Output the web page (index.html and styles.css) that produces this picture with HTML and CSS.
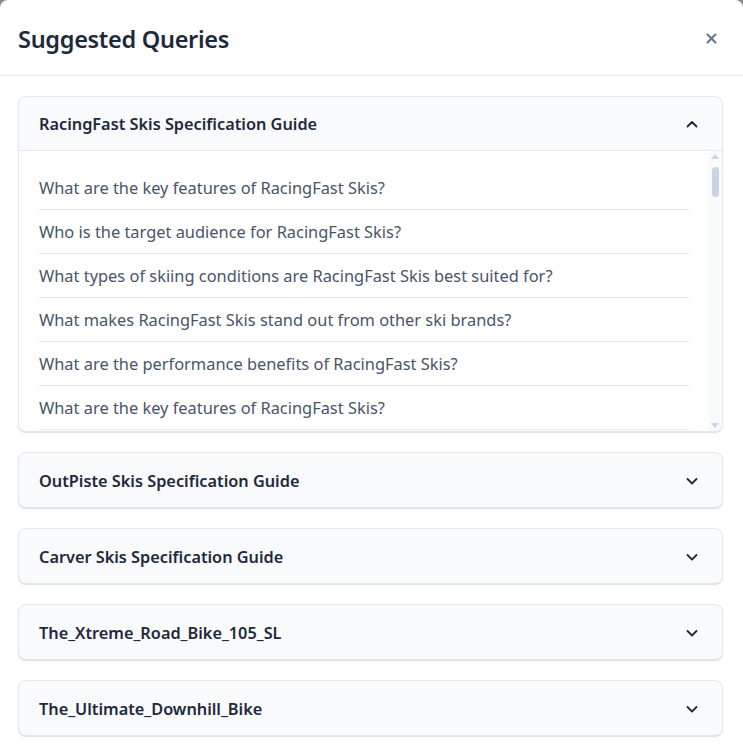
FILE: index.html
```html
<!DOCTYPE html>
<html lang="en">
<head>
<meta charset="utf-8">
<title>Suggested Queries</title>
<link rel="stylesheet" href="styles.css">
</head>
<body>
<div class="modal">
  <header class="modal-header">
    <h2 class="modal-title">Suggested Queries</h2>
    <button class="close-btn" aria-label="Close">
      <svg width="11" height="11" viewBox="0 0 11 11"><path d="M1.5 1.5L9.5 9.5M9.5 1.5L1.5 9.5" stroke="#64748b" stroke-width="2" stroke-linecap="round"/></svg>
    </button>
  </header>
  <div class="modal-body">
    <section class="acc open">
      <div class="acc-head">
        <span class="acc-title">RacingFast Skis Specification Guide</span>
        <svg class="chev" width="14" height="14" viewBox="0 0 14 14"><path d="M2.5 9.5L7 5L11.5 9.5" fill="none" stroke="#1e293b" stroke-width="1.8" stroke-linecap="round" stroke-linejoin="round"/></svg>
      </div>
      <div class="acc-content">
        <div class="q-scroll">
          <ul class="q-list">
            <li>What are the key features of RacingFast Skis?</li>
            <li>Who is the target audience for RacingFast Skis?</li>
            <li>What types of skiing conditions are RacingFast Skis best suited for?</li>
            <li>What makes RacingFast Skis stand out from other ski brands?</li>
            <li>What are the performance benefits of RacingFast Skis?</li>
            <li>What are the key features of RacingFast Skis?</li>
            <li>Who is the target audience for RacingFast Skis?</li>
          </ul>
        </div>
        <div class="scrollbar" aria-hidden="true">
          <span class="sb-up"></span>
          <span class="sb-thumb"></span>
          <span class="sb-down"></span>
        </div>
      </div>
    </section>
    <section class="acc">
      <div class="acc-head">
        <span class="acc-title">OutPiste Skis Specification Guide</span>
        <svg class="chev" width="14" height="14" viewBox="0 0 14 14"><path d="M2.5 5L7 9.5L11.5 5" fill="none" stroke="#1e293b" stroke-width="1.8" stroke-linecap="round" stroke-linejoin="round"/></svg>
      </div>
    </section>
    <section class="acc">
      <div class="acc-head">
        <span class="acc-title">Carver Skis Specification Guide</span>
        <svg class="chev" width="14" height="14" viewBox="0 0 14 14"><path d="M2.5 5L7 9.5L11.5 5" fill="none" stroke="#1e293b" stroke-width="1.8" stroke-linecap="round" stroke-linejoin="round"/></svg>
      </div>
    </section>
    <section class="acc">
      <div class="acc-head">
        <span class="acc-title">The_Xtreme_Road_Bike_105_SL</span>
        <svg class="chev" width="14" height="14" viewBox="0 0 14 14"><path d="M2.5 5L7 9.5L11.5 5" fill="none" stroke="#1e293b" stroke-width="1.8" stroke-linecap="round" stroke-linejoin="round"/></svg>
      </div>
    </section>
    <section class="acc">
      <div class="acc-head">
        <span class="acc-title">The_Ultimate_Downhill_Bike</span>
        <svg class="chev" width="14" height="14" viewBox="0 0 14 14"><path d="M2.5 5L7 9.5L11.5 5" fill="none" stroke="#1e293b" stroke-width="1.8" stroke-linecap="round" stroke-linejoin="round"/></svg>
      </div>
    </section>
  </div>
</div>
</body>
</html>
```
FILE: styles.css
```css
html, body {
  margin: 0;
  padding: 0;
  background: #8a8a8a;
  height: 100%;
  overflow: hidden;
}
body {
  font-family: "Noto Sans", "Open Sans", sans-serif;
  color: #1e293b;
}
.modal {
  background: #ffffff;
  border-radius: 8px 8px 0 0;
  height: 100%;
  display: flex;
  flex-direction: column;
}
.modal-header {
  height: 76px;
  flex: none;
  box-sizing: border-box;
  border-bottom: 1px solid #e2e8f0;
  display: flex;
  align-items: center;
  justify-content: space-between;
  padding: 2px 26px 0 18px;
}
.modal-title {
  margin: 0;
  font-size: 23.5px;
  font-weight: 600;
  color: #1e293b;
  letter-spacing: -0.3px;
}
.close-btn {
  border: 0;
  background: none;
  padding: 0;
  width: 11px;
  height: 11px;
  display: flex;
  cursor: pointer;
}
.modal-body {
  padding: 20px 20px 0 18px;
  display: flex;
  flex-direction: column;
  gap: 20px;
}
.acc {
  border: 1px solid #e2e8f0;
  border-radius: 8px;
  background: #f8fafc;
  overflow: hidden;
  box-shadow: 0 1px 1px rgba(148, 163, 184, 0.35);
}
.acc-head {
  height: 54px;
  box-sizing: border-box;
  display: flex;
  align-items: center;
  justify-content: space-between;
  padding: 1px 23px 0 20px;
}
.acc-title {
  font-size: 16.3px;
  font-weight: 600;
  color: #1e293b;
}
.chev {
  display: block;
}
.acc.open .acc-head {
  border-bottom: 1px solid #e2e8f0;
}
.acc-content {
  background: #ffffff;
  height: 280px;
  display: flex;
}
.q-scroll {
  flex: 1;
  min-width: 0;
  overflow: hidden;
  padding: 15px 19px 0 20px;
}
.q-list {
  list-style: none;
  margin: 0;
  padding: 0;
}
.q-list li {
  font-size: 16.4px;
  line-height: 24px;
  padding: 10px 0 9px;
  border-bottom: 1px solid #e2e8f0;
  color: #475569;
  white-space: nowrap;
}
.scrollbar {
  width: 14px;
  flex: none;
  background: #f8fafc;
  display: flex;
  flex-direction: column;
  align-items: center;
  padding: 3px 0 3px;
  box-sizing: border-box;
}
.sb-up {
  width: 0;
  height: 0;
  border-left: 4px solid transparent;
  border-right: 4px solid transparent;
  border-bottom: 5px solid #cbd5e1;
}
.sb-thumb {
  width: 7px;
  height: 30px;
  margin-top: 8px;
  border-radius: 4px;
  background: #cbd5e1;
}
.sb-down {
  margin-top: auto;
  width: 0;
  height: 0;
  border-left: 4px solid transparent;
  border-right: 4px solid transparent;
  border-top: 5px solid #cbd5e1;
}
```
